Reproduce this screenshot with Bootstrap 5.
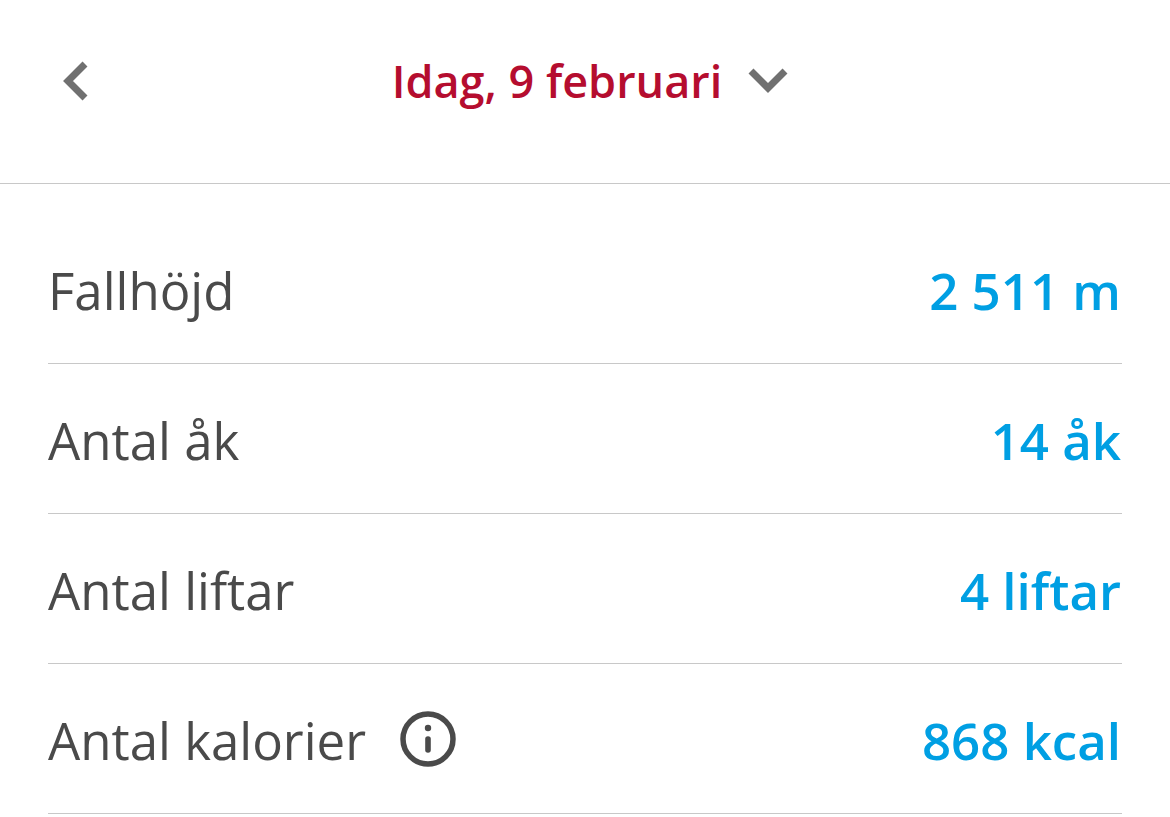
<!DOCTYPE html>
<html lang="sv">
<head>
<meta charset="utf-8">
<meta name="viewport" content="width=device-width, initial-scale=1">
<title>Idag, 9 februari</title>
<link href="https://cdn.jsdelivr.net/npm/bootstrap@5.3.0/dist/css/bootstrap.min.css" rel="stylesheet">
<style>
  body { font-family: "Open Sans", "Noto Sans", sans-serif; color: #4a4a4a; background: #fff; }
  .day-bar { height: 184px; padding: 0 48px 22px; border-bottom: 1px solid #c8c8c8; }
  .day-bar .btn { --bs-btn-border-width: 0px; line-height: 60px; }
  .day-side { width: 54px; }
  .day-end { width: 44px; }
  .day-pick, .day-pick:hover { font-size: 45px; font-weight: 600; color: #b50d2f; gap: 26px; }
  .stats { padding: 30px 48px 0; }
  .stat-row { height: 150px; border-bottom: 1px solid #c8c8c8; font-size: 51px; line-height: 68px; padding-top: 2px; }
  .stat-row dd { padding-right: 1px; font-weight: 600; color: #009fe3; }
  .info-btn { margin-left: 34px; padding-bottom: 2px; --bs-btn-border-width: 0px; }
</style>
</head>
<body>
<header class="day-bar d-flex align-items-center justify-content-between">
  <button type="button" class="btn p-0 day-side d-flex justify-content-center" aria-label="Föregående dag">
    <svg width="40" height="40" viewBox="0 0 40 40" fill="none" stroke="#707070" stroke-width="7"><path d="M30 3 L13 20 L30 37"/></svg>
  </button>
  <button type="button" class="btn p-0 day-pick d-flex align-items-center">
    Idag, 9 februari
    <svg width="40" height="40" viewBox="0 0 40 40" fill="none" stroke="#707070" stroke-width="7"><path d="M3 10 L20 27 L37 10"/></svg>
  </button>
  <span class="day-end"></span>
</header>
<main class="stats">
  <dl class="mb-0">
    <div class="stat-row d-flex align-items-center justify-content-between"><dt class="fw-normal">Fallhöjd</dt><dd class="mb-0">2 511 m</dd></div>
    <div class="stat-row d-flex align-items-center justify-content-between"><dt class="fw-normal">Antal åk</dt><dd class="mb-0">14 åk</dd></div>
    <div class="stat-row d-flex align-items-center justify-content-between"><dt class="fw-normal">Antal liftar</dt><dd class="mb-0">4 liftar</dd></div>
    <div class="stat-row d-flex align-items-center justify-content-between">
      <dt class="fw-normal d-flex align-items-center">Antal kalorier
        <button type="button" class="btn px-0 pt-0 info-btn d-flex" aria-label="Om kalorier"><svg width="56" height="56" viewBox="0 0 56 56"><circle cx="28" cy="28" r="25" fill="none" stroke="#4a4a4a" stroke-width="5.5"/><circle cx="28" cy="17" r="3.2" fill="#4a4a4a"/><path d="M28 28V39" stroke="#4a4a4a" stroke-width="5.6" stroke-linecap="round"/></svg></button>
      </dt>
      <dd class="mb-0">868 kcal</dd>
    </div>
  </dl>
</main>
<script src="https://cdn.jsdelivr.net/npm/bootstrap@5.3.0/dist/js/bootstrap.bundle.min.js"></script>
</body>
</html>
